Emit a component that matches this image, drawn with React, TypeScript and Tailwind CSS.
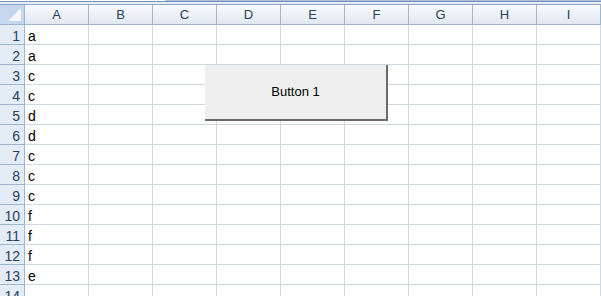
const cols = ['A', 'B', 'C', 'D', 'E', 'F', 'G', 'H', 'I'];
const values = ['a', 'a', 'c', 'c', 'd', 'd', 'c', 'c', 'c', 'f', 'f', 'f', 'e', ''];

const font = { fontFamily: '"Liberation Sans", Arial, sans-serif' };

export default function App() {
  return (
    <div className="w-[601px] h-[296px] overflow-hidden bg-white relative" style={font}>
      {/* formula bar remnant */}
      <div className="h-[5px] flex flex-col">
        <div className="h-[1px] flex">
          <div className="w-[165px] bg-white" />
          <div className="flex-1 bg-[#a7bfdc]" />
        </div>
        <div className="h-[1px] bg-[#7a93b5]" />
        <div className="h-[2px] bg-[#e6edf6]" />
        <div className="h-[1px] bg-[#8ea6c6]" />
      </div>

      {/* column headers */}
      <div className="flex h-[20px]">
        <div className="w-[25px] shrink-0 h-full bg-[#c5d6ee] border-r border-b border-[#9eb6ce] relative">
          <div className="absolute right-[3px] bottom-[3px] w-0 h-0 border-l-[13px] border-l-transparent border-b-[13px] border-b-[#f4f8fd]" />
        </div>
        {cols.map((c) => (
          <div
            key={c}
            className="w-[64px] shrink-0 h-full flex items-center justify-center text-[13px] text-[#27415f] bg-gradient-to-b from-[#f9fbfd] to-[#e1e8f1] border-r border-b border-[#9eb6ce]"
          >
            {c}
          </div>
        ))}
      </div>

      {/* rows */}
      {values.map((v, i) => (
        <div key={i} className="flex h-[20px]">
          <div className="w-[25px] shrink-0 h-full flex items-end justify-end pr-[4px] text-[14px] leading-[16px] text-[#27415f] bg-[#e4ecf7] border-r border-b border-[#9eb6ce]">
            {i + 1}
          </div>
          {cols.map((c, j) => (
            <div
              key={c}
              className="w-[64px] shrink-0 h-full flex items-end pl-[3px] text-[14px] leading-[16px] text-black border-r border-b border-[#d0d7e5]"
            >
              {j === 0 ? v : ''}
            </div>
          ))}
        </div>
      ))}

      {/* form button over the sheet */}
      <div className="absolute left-[205px] top-[65px] w-[183px] h-[56px] bg-[#efefef] border-r-2 border-b-2 border-[#6b6b6b] flex items-center justify-center text-[13px] text-black">
        Button 1
      </div>
    </div>
  );
}
